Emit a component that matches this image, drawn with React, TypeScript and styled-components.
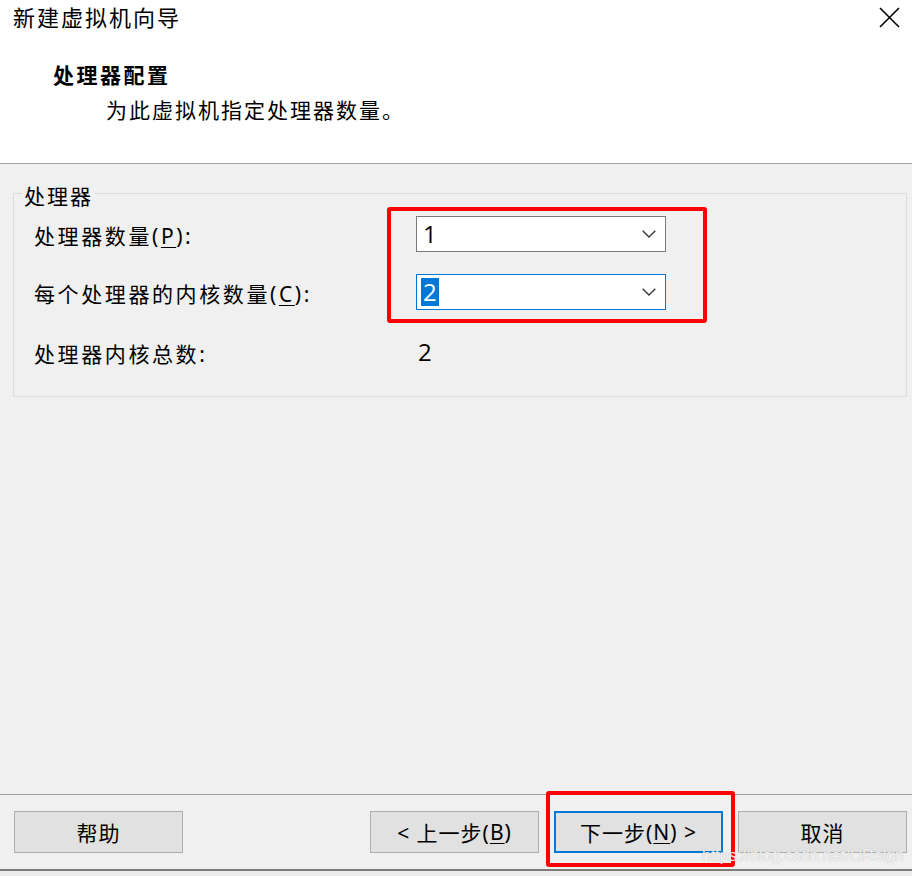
import React from "react";
import styled, { createGlobalStyle } from "styled-components";

const Global = createGlobalStyle`
  html, body { margin: 0; padding: 0; background: #f0f0f0; }
  body { font-family: "Noto Sans", "Noto Sans CJK SC", sans-serif; }
`;

const FONT = `"Noto Sans", "Noto Sans CJK SC", sans-serif`;

const Window = styled.div`
  position: relative;
  width: 912px;
  height: 876px;
  display: flex;
  flex-direction: column;
  background: #f0f0f0;
  overflow: hidden;
  font-family: ${FONT};
  color: #000;
`;

const Header = styled.header`
  height: 163px;
  flex: none;
  background: #fff;
  border-bottom: 1px solid #a0a0a0;
  display: flex;
  flex-direction: column;
`;

const TitleRow = styled.div`
  height: 34px;
  display: flex;
  align-items: center;
  justify-content: space-between;
  padding: 0 12px 0 13px;
`;

const Title = styled.div`
  font-size: 22px;
  letter-spacing: 2px;
  line-height: 34px;
`;

const CloseButton = styled.div`
  width: 21px;
  height: 21px;
  display: flex;
  align-items: center;
  justify-content: center;
`;

const Heading = styled.div`
  margin-top: 26px;
  padding-left: 53px;
  font-size: 21px;
  font-weight: 700;
  letter-spacing: 2.5px;
  line-height: 30px;
`;

const Subtitle = styled.div`
  margin-top: 5px;
  padding-left: 106px;
  font-size: 21px;
  letter-spacing: 2px;
  line-height: 30px;
`;

const Body = styled.main`
  flex: 1;
  display: flex;
  flex-direction: column;
`;

const GroupBox = styled.section`
  margin: 29px 5px 0 13px;
  border: 1px solid #dcdcdc;
  padding: 0 0 28px 0;
  display: flex;
  flex-direction: column;
`;

const Legend = styled.div`
  align-self: flex-start;
  margin: -11px 0 0 8px;
  padding: 0 2px;
  height: 26px;
  line-height: 26px;
  font-size: 21px;
  letter-spacing: 2px;
  background: #f0f0f0;
`;

const FieldGrid = styled.div`
  margin: 7px 0 0 20px;
  display: grid;
  grid-template-columns: 382px 250px;
  grid-auto-rows: 36px;
  row-gap: 22px;
  align-items: center;
`;

const Label = styled.div<{ $gap?: number }>`
  font-size: 21px;
  letter-spacing: 2.6px;
  line-height: 36px;
  padding-top: 3px;
  white-space: nowrap;
  margin-top: ${(p) => p.$gap ?? 0}px;
`;

const U = styled.span`
  text-decoration: underline;
  text-underline-offset: 3px;
  text-decoration-thickness: 1px;
`;

const Select = styled.div<{ $focused?: boolean }>`
  box-sizing: border-box;
  height: 36px;
  background: #fff;
  border: 1px solid ${(p) => (p.$focused ? "#0078d7" : "#7a7a7a")};
  display: flex;
  align-items: center;
  justify-content: space-between;
  padding: 0 9px 0 4px;
`;

const Value = styled.span<{ $selected?: boolean; $gap?: number }>`
  font-family: "Open Sans", "Noto Sans", sans-serif;
  font-size: 24px;
  line-height: 28px;
  padding: 0 2px;
  margin-top: ${(p) => p.$gap ?? 0}px;
  justify-self: start;
  background: ${(p) => (p.$selected ? "#0078d7" : "transparent")};
  color: ${(p) => (p.$selected ? "#fff" : "#000")};
`;

const Footer = styled.footer`
  box-sizing: border-box;
  height: 75px;
  flex: none;
  border-top: 1px solid #a0a0a0;
  display: flex;
  align-items: flex-start;
  justify-content: space-between;
  padding: 16px 5px 0 14px;
`;

const ButtonGroup = styled.div`
  display: flex;
  gap: 15px;
`;

const Button = styled.button<{ $default?: boolean }>`
  box-sizing: border-box;
  width: 169px;
  height: 42px;
  background: #e1e1e1;
  border: ${(p) => (p.$default ? "2px solid #0078d7" : "1px solid #adadad")};
  font-family: ${FONT};
  font-size: 21px;
  letter-spacing: 1px;
  color: #000;
  padding: 0;
  display: flex;
  align-items: center;
  justify-content: center;
`;

const BottomEdge = styled.div`
  box-sizing: border-box;
  height: 7px;
  flex: none;
  border-top: 2px solid #7d7d7d;
  background: #ececec;
`;

const Annotation = styled.div<{ $l: number; $t: number; $w: number; $h: number }>`
  position: absolute;
  left: ${(p) => p.$l}px;
  top: ${(p) => p.$t}px;
  width: ${(p) => p.$w}px;
  height: ${(p) => p.$h}px;
  box-sizing: border-box;
  border: 4px solid #ff0000;
  border-radius: 3px;
  pointer-events: none;
`;

const Watermark = styled.div`
  position: absolute;
  left: 702px;
  top: 846px;
  font-family: "Liberation Sans", Arial, sans-serif;
  font-size: 16px;
  line-height: 20px;
  color: rgba(255, 255, 255, 0.85);
  text-shadow: 0 0 1px rgba(120, 120, 120, 0.6);
  pointer-events: none;
`;

const Chevron = () => (
  <svg width="14" height="8" viewBox="0 0 14 8" fill="none">
    <path d="M0.7 0.7 L7 7 L13.3 0.7" stroke="#333" strokeWidth="1.3" />
  </svg>
);

const CloseIcon = () => (
  <svg width="21" height="21" viewBox="0 0 21 21" fill="none">
    <path d="M1 1 L20 20 M20 1 L1 20" stroke="#000" strokeWidth="1.6" />
  </svg>
);

export default function App() {
  return (
    <>
      <Global />
      <Window>
        <Header>
          <TitleRow>
            <Title>新建虚拟机向导</Title>
            <CloseButton>
              <CloseIcon />
            </CloseButton>
          </TitleRow>
          <Heading>处理器配置</Heading>
          <Subtitle>为此虚拟机指定处理器数量。</Subtitle>
        </Header>
        <Body>
          <GroupBox>
            <Legend>处理器</Legend>
            <FieldGrid>
              <Label>
                处理器数量(<U>P</U>):
              </Label>
              <Select>
                <Value>1</Value>
                <Chevron />
              </Select>
              <Label>
                每个处理器的内核数量(<U>C</U>):
              </Label>
              <Select $focused>
                <Value $selected>2</Value>
                <Chevron />
              </Select>
              <Label $gap={4}>处理器内核总数:</Label>
              <Value $gap={4}>2</Value>
            </FieldGrid>
          </GroupBox>
        </Body>
        <Footer>
          <Button>帮助</Button>
          <ButtonGroup>
            <Button>
              &lt; 上一步(<U>B</U>)
            </Button>
            <Button $default>
              下一步(<U>N</U>) &gt;
            </Button>
            <Button>取消</Button>
          </ButtonGroup>
        </Footer>
        <BottomEdge />
        <Annotation $l={387} $t={207} $w={320} $h={116} />
        <Annotation $l={546} $t={791} $w={189} $h={76} />
        <Watermark>https://blog.csdn.net/LiReign</Watermark>
      </Window>
    </>
  );
}
